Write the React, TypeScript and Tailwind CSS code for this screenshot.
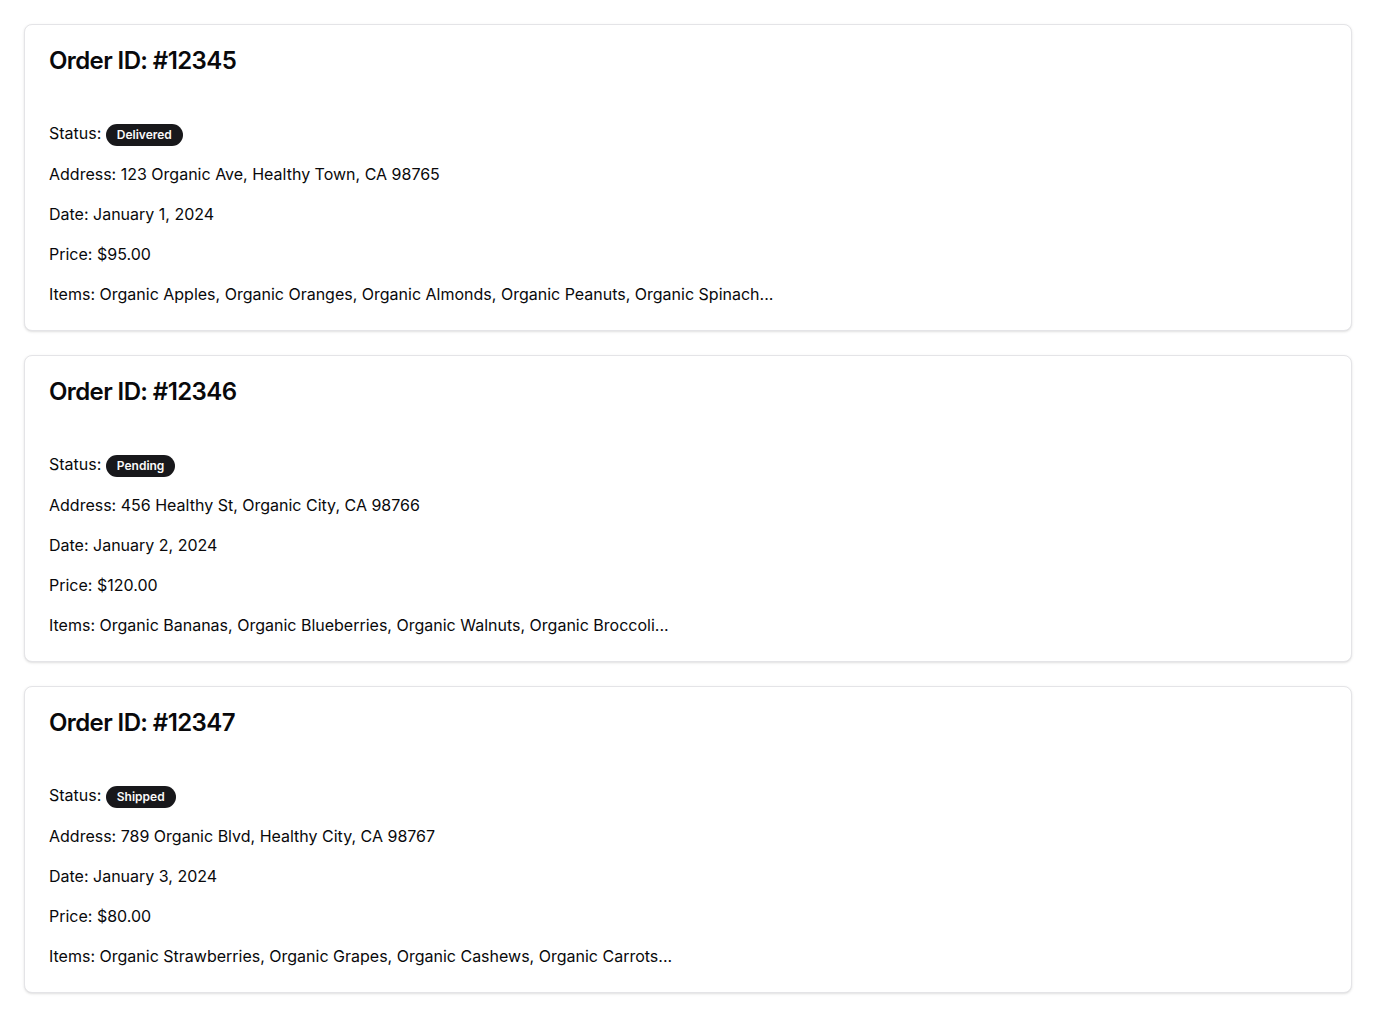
import React from "react";

const orders = [
  {
    id: "12345",
    status: "Delivered",
    address: "123 Organic Ave, Healthy Town, CA 98765",
    date: "January 1, 2024",
    price: "$95.00",
    items: "Organic Apples, Organic Oranges, Organic Almonds, Organic Peanuts, Organic Spinach...",
  },
  {
    id: "12346",
    status: "Pending",
    address: "456 Healthy St, Organic City, CA 98766",
    date: "January 2, 2024",
    price: "$120.00",
    items: "Organic Bananas, Organic Blueberries, Organic Walnuts, Organic Broccoli...",
  },
  {
    id: "12347",
    status: "Shipped",
    address: "789 Organic Blvd, Healthy City, CA 98767",
    date: "January 3, 2024",
    price: "$80.00",
    items: "Organic Strawberries, Organic Grapes, Organic Cashews, Organic Carrots...",
  },
];

export default function App() {
  return (
    <div
      className="min-h-screen bg-white p-6 flex flex-col gap-6 text-[#09090b]"
      style={{ fontFamily: "Inter, 'Noto Sans', sans-serif" }}
    >
      {orders.map((o) => (
        <div
          key={o.id}
          className="rounded-lg border border-[#e4e4e7] bg-white shadow-sm"
        >
          <div className="p-6 pb-0">
            <h3 className="text-2xl font-semibold leading-none tracking-tight">
              Order ID: #{o.id}
            </h3>
          </div>
          <div className="p-6 pt-12 flex flex-col gap-4 text-base leading-6">
            <p>
              Status:{" "}
              <span className="inline-flex items-center rounded-full border border-transparent bg-[#18181b] px-2.5 py-0.5 text-xs font-semibold leading-4 text-[#fafafa]">
                {o.status}
              </span>
            </p>
            <p>Address: {o.address}</p>
            <p>Date: {o.date}</p>
            <p>Price: {o.price}</p>
            <p>Items: {o.items}</p>
          </div>
        </div>
      ))}
    </div>
  );
}
